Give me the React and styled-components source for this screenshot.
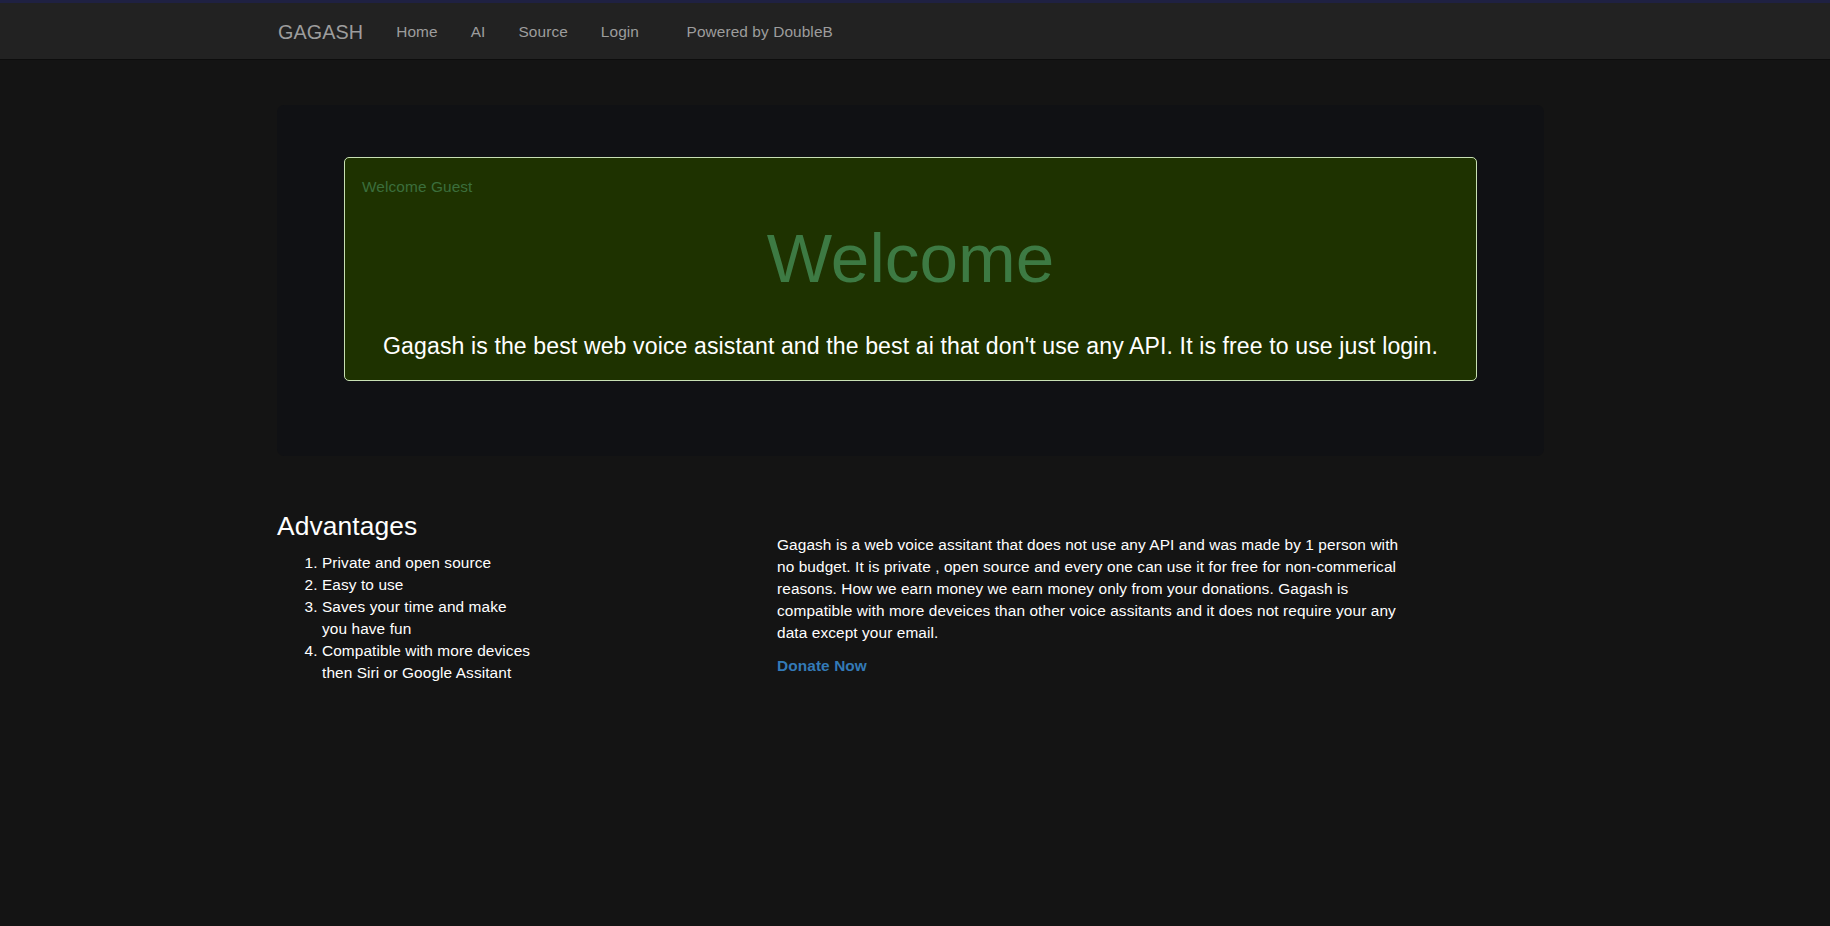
import React from "react";
import styled, { createGlobalStyle } from "styled-components";

const GlobalStyle = createGlobalStyle`
  html, body {
    margin: 0;
    padding: 0;
    min-height: 100%;
    background: #141414;
  }
  body {
    font-family: "Liberation Sans", Arial, Helvetica, sans-serif;
    font-size: 15.4px;
    line-height: 22px;
    letter-spacing: 0.1px;
    color: #ffffff;
  }
  * {
    box-sizing: border-box;
  }
`;

const Page = styled.div`
  min-height: 926px;
  background: #141414;
`;

const TopStrip = styled.div`
  height: 3px;
  background: #1f2142;
`;

const Navbar = styled.nav`
  height: 57px;
  background: #222222;
  border-bottom: 1px solid #0d0d0d;
`;

const NavInner = styled.div`
  margin-left: 278px;
  height: 100%;
  padding-top: 2px;
  display: flex;
  align-items: center;
`;

const Brand = styled.a`
  font-size: 19.8px;
  color: #9d9d9d;
  text-decoration: none;
  padding-right: 16.5px;
  line-height: 22px;
`;

const NavLink = styled.a`
  font-size: 15.4px;
  color: #9d9d9d;
  text-decoration: none;
  padding: 0 16.5px;
  line-height: 22px;
`;

const NavText = styled.span`
  font-size: 15.4px;
  color: #9d9d9d;
  margin-left: 31px;
  line-height: 22px;
`;

const Container = styled.div`
  width: 1267px;
  margin-left: 277px;
`;

const Jumbotron = styled.section`
  margin-top: 45px;
  margin-bottom: 34px;
  background: #101114;
  border-radius: 7px;
  padding: 52px 67px 75px;
`;

const WelcomeBox = styled.div`
  background: #1e3200;
  border: 1px solid #c8e0b4;
  border-radius: 5px;
  padding: 18px 17px 17px;
`;

const Guest = styled.p`
  margin: 0;
  font-size: 15.4px;
  line-height: 22px;
  color: #3b6e3c;
`;

const Title = styled.h1`
  margin: 22px 0 0;
  font-size: 69.3px;
  line-height: 1.1;
  font-weight: 400;
  letter-spacing: 0;
  text-align: center;
  color: #3d7a43;
`;

const Lead = styled.p`
  margin: 34px 0 0;
  font-size: 23.1px;
  line-height: 33px;
  text-align: center;
  color: #ffffff;
`;

const Columns = styled.div`
  display: grid;
  grid-template-columns: 256px 630px;
  column-gap: 244px;
  align-items: start;
`;

const Heading = styled.h3`
  margin: 22px 0 11px;
  font-size: 26.4px;
  line-height: 1.1;
  font-weight: 400;
  color: #ffffff;
`;

const List = styled.ol`
  margin: 0 0 11px;
  padding-left: 45px;
  color: #ffffff;
`;

const Item = styled.li`
  line-height: 22px;
`;

const About = styled.div`
  padding-top: 44px;
`;

const Text = styled.p`
  margin: 0 0 11px;
  color: #ffffff;
`;

const Donate = styled.a`
  color: #337ab7;
  font-weight: 700;
  text-decoration: none;
`;

const advantages = [
  "Private and open source",
  "Easy to use",
  "Saves your time and make you have fun",
  "Compatible with more devices then Siri or Google Assitant",
];

export default function App() {
  return (
    <Page>
      <GlobalStyle />
      <TopStrip />
      <Navbar>
        <NavInner>
          <Brand href="#">GAGASH</Brand>
          <NavLink href="#">Home</NavLink>
          <NavLink href="#">AI</NavLink>
          <NavLink href="#">Source</NavLink>
          <NavLink href="#">Login</NavLink>
          <NavText>Powered by DoubleB</NavText>
        </NavInner>
      </Navbar>
      <Container>
        <Jumbotron>
          <WelcomeBox>
            <Guest>Welcome Guest</Guest>
            <Title>Welcome</Title>
            <Lead>
              Gagash is the best web voice asistant and the best ai that don't
              use any API. It is free to use just login.
            </Lead>
          </WelcomeBox>
        </Jumbotron>
        <Columns>
          <div>
            <Heading>Advantages</Heading>
            <List>
              {advantages.map((a) => (
                <Item key={a}>{a}</Item>
              ))}
            </List>
          </div>
          <About>
            <Text>
              Gagash is a web voice assitant that does not use any API and was
              made by 1 person with no budget. It is private , open source and
              every one can use it for free for non-commerical reasons. How we
              earn money we earn money only from your donations. Gagash is
              compatible with more deveices than other voice assitants and it
              does not require your any data except your email.
            </Text>
            <Donate href="#">Donate Now</Donate>
          </About>
        </Columns>
      </Container>
    </Page>
  );
}
